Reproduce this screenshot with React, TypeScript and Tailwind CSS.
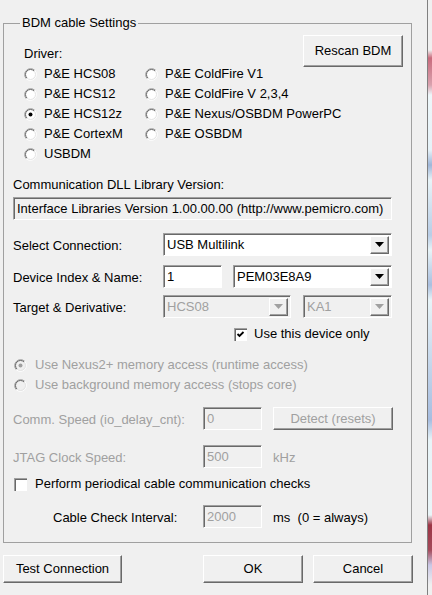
import React from "react";

const dis = "text-[#a0a0a0]";

function Radio({ checked = false, disabled = false }: { checked?: boolean; disabled?: boolean }) {
  return (
    <svg width="13" height="13" viewBox="0 0 13 13" className="shrink-0">
      <circle cx="6.5" cy="6.5" r="5.5" fill={disabled ? "#f0f0f0" : "#fff"} />
      <path d="M2.26 10.74 A6 6 0 0 1 10.74 2.26" stroke="#a0a0a0" fill="none" />
      <path d="M10.74 2.26 A6 6 0 0 1 2.26 10.74" stroke="#ffffff" fill="none" />
      <path d="M2.96 10.04 A5 5 0 0 1 10.04 2.96" stroke="#696969" fill="none" />
      <path d="M10.04 2.96 A5 5 0 0 1 2.96 10.04" stroke="#e3e3e3" fill="none" />
      {checked && <circle cx="6.5" cy="6.5" r="2" fill={disabled ? "#a0a0a0" : "#000"} />}
    </svg>
  );
}

function Check({ checked = false }: { checked?: boolean }) {
  return (
    <div className="w-[13px] h-[13px] shrink-0 bg-white border-t border-l border-[#a0a0a0] border-b-white border-r-white shadow-[inset_1px_1px_0_#696969] relative">
      {checked && (
        <svg width="13" height="13" viewBox="0 0 13 13" className="absolute left-[-1px] top-[-1px]">
          <path d="M3.5 6 L5.5 8 L9.5 4" stroke="#000" strokeWidth="1.8" fill="none" />
        </svg>
      )}
    </div>
  );
}

function Edit({ value, w, disabled = false }: { value: string; w: string; disabled?: boolean }) {
  return (
    <div
      className={`${w} h-[23px] shrink-0 flex items-center pl-[3px] border border-t-[#a0a0a0] border-l-[#a0a0a0] border-b-white border-r-white shadow-[inset_1px_1px_0_#696969] ${
        disabled ? "bg-[#f0f0f0] " + dis : "bg-white text-black"
      }`}
    >
      {value}
    </div>
  );
}

function Combo({ value, w, disabled = false }: { value: string; w: string; disabled?: boolean }) {
  return (
    <div
      className={`${w} h-[23px] shrink-0 flex items-center pl-[3px] pr-[2px] border border-t-[#a0a0a0] border-l-[#a0a0a0] border-b-white border-r-white shadow-[inset_1px_1px_0_#696969] ${
        disabled ? "bg-[#f0f0f0] " + dis : "bg-white text-black"
      }`}
    >
      <span className="flex-1">{value}</span>
      <div className="w-[19px] h-[18px] bg-[#f0f0f0] border border-t-white border-l-white border-b-[#696969] border-r-[#696969] shadow-[inset_-1px_-1px_0_#a0a0a0] flex items-center justify-center">
        <svg width="9" height="5" viewBox="0 0 9 5">
          <path d="M0 0 H9 L4.5 5 Z" fill={disabled ? "#a0a0a0" : "#000"} />
        </svg>
      </div>
    </div>
  );
}

function Btn({ label, w, h, disabled = false }: { label: string; w: string; h: string; disabled?: boolean }) {
  return (
    <div
      className={`${w} ${h} shrink-0 flex items-center justify-center whitespace-nowrap bg-[#f0f0f0] border border-t-white border-l-white border-b-[#696969] border-r-[#696969] shadow-[inset_-1px_-1px_0_#a0a0a0] ${
        disabled ? dis : "text-black"
      }`}
    >
      {label}
    </div>
  );
}

const drivers: [string, boolean][] = [
  ["P&E HCS08", false],
  ["P&E ColdFire V1", false],
  ["P&E HCS12", false],
  ["P&E ColdFire V 2,3,4", false],
  ["P&E HCS12z", true],
  ["P&E Nexus/OSBDM PowerPC", false],
  ["P&E CortexM", false],
  ["P&E OSBDM", false],
  ["USBDM", false],
];

export default function App() {
  return (
    <div className="w-[432px] h-[595px] flex bg-[#f0f0f0] text-[13px] text-black font-['Liberation_Sans',Arial,sans-serif] overflow-hidden whitespace-nowrap">
      <div className="w-[427px] shrink-0 flex flex-col">
        <fieldset className="ml-[3px] mt-[15px] w-[409px] min-w-0 border border-[#a0a0a0] px-[9px] pb-[14px]">
          <legend className="ml-[7px] px-[2px] leading-[16px]">BDM cable Settings</legend>

          {/* Driver */}
          <div className="grid grid-cols-[290px_100px]">
            <div className="pl-[11px] pt-[13px] min-w-0">
              <div className="h-[20px] leading-[20px]">Driver:</div>
              <div className="grid grid-cols-[121px_160px]">
                {drivers.map(([name, on]) => (
                  <div key={name} className="h-[20px] flex items-center gap-[7px]">
                    <Radio checked={on} />
                    <span>{name}</span>
                  </div>
                ))}
              </div>
            </div>
            <div className="mt-[4px]">
              <Btn label="Rescan BDM" w="w-[100px]" h="h-[32px]" />
            </div>
          </div>

          <div className="mt-[11px] h-[20px] leading-[20px]">Communication DLL Library Version:</div>
          <div className="mt-[2px] w-[379px] h-[23px] flex items-center pl-[3px] border border-t-[#a0a0a0] border-l-[#a0a0a0] border-b-white border-r-white shadow-[inset_1px_1px_0_#696969]">
            Interface Libraries Version 1.00.00.00 (http://www.pemicro.com)
          </div>

          {/* Connection */}
          <div className="mt-[13px] grid grid-cols-[150px_229px] items-center">
            <span className="pt-[3px]">Select Connection:</span>
            <Combo value="USB Multilink" w="w-[229px]" />
          </div>
          <div className="mt-[9px] grid grid-cols-[150px_59px_11px_159px] items-center">
            <span className="pt-[3px]">Device Index &amp; Name:</span>
            <Edit value="1" w="w-[59px]" />
            <span />
            <Combo value="PEM03E8A9" w="w-[159px]" />
          </div>
          <div className="mt-[7px] grid grid-cols-[150px_128px_12px_89px] items-center">
            <span className="pt-[3px]">Target &amp; Derivative:</span>
            <Combo value="HCS08" w="w-[128px]" disabled />
            <span />
            <Combo value="KA1" w="w-[89px]" disabled />
          </div>
          <div className="mt-[9px] h-[14px] flex items-center gap-[7px] ml-[221px]">
            <Check checked />
            <span>Use this device only</span>
          </div>

          {/* Memory access */}
          <div className={`mt-[14px] ml-[1px] ${dis}`}>
            <div className="h-[20px] flex items-center gap-[8px]">
              <Radio checked disabled />
              <span>Use Nexus2+ memory access (runtime access)</span>
            </div>
            <div className="h-[20px] flex items-center gap-[8px]">
              <Radio disabled />
              <span>Use background memory access (stops core)</span>
            </div>
          </div>

          <div className="mt-[12px] grid grid-cols-[190px_59px_11px_120px] items-center">
            <span className={`pt-[3px] ${dis}`}>Comm. Speed (io_delay_cnt):</span>
            <Edit value="0" w="w-[59px]" disabled />
            <span />
            <Btn label="Detect (resets)" w="w-[120px]" h="h-[23px]" disabled />
          </div>
          <div className="mt-[15px] grid grid-cols-[190px_59px_11px_auto] items-center">
            <span className={`pt-[3px] ${dis}`}>JTAG Clock Speed:</span>
            <Edit value="500" w="w-[59px]" disabled />
            <span />
            <span className={`pt-[3px] ${dis}`}>kHz</span>
          </div>

          <div className="mt-[9px] ml-[1px] h-[14px] flex items-center gap-[8px]">
            <Check />
            <span>Perform periodical cable communication checks</span>
          </div>
          <div className="mt-[14px] grid grid-cols-[40px_150px_59px_11px_auto] items-center">
            <span />
            <span className="pt-[3px]">Cable Check Interval:</span>
            <Edit value="2000" w="w-[59px]" disabled />
            <span />
            <span className="pt-[3px] whitespace-pre">ms  (0 = always)</span>
          </div>
        </fieldset>

        <div className="mt-[12px] ml-[3px] grid grid-cols-[119px_81px_100px_10px_100px]">
          <Btn label="Test Connection" w="w-[119px]" h="h-[28px]" />
          <span />
          <Btn label="OK" w="w-[100px]" h="h-[28px]" />
          <span />
          <Btn label="Cancel" w="w-[100px]" h="h-[28px]" />
        </div>
      </div>
      <div className="w-px shrink-0 bg-[#808080]" />
      <div className="flex-1 bg-[linear-gradient(to_bottom,#f0f0f0_0px,#f0f0f0_50px,#c86a7c_58px,#d9a2ae_85px,#eef7fa_95px,#e6f2f8_150px,#9fb6d8_165px,#e8f4f8_180px,#b9cde6_235px,#e8f4f8_250px,#aabfdf_285px,#e8f4f8_300px,#a7bde0_420px,#e8f4f8_440px,#eaf5f8_515px,#9c3545_525px,#a44a5a_550px,#c9c7e5_565px,#f0f0f0_585px)]" />
    </div>
  );
}
